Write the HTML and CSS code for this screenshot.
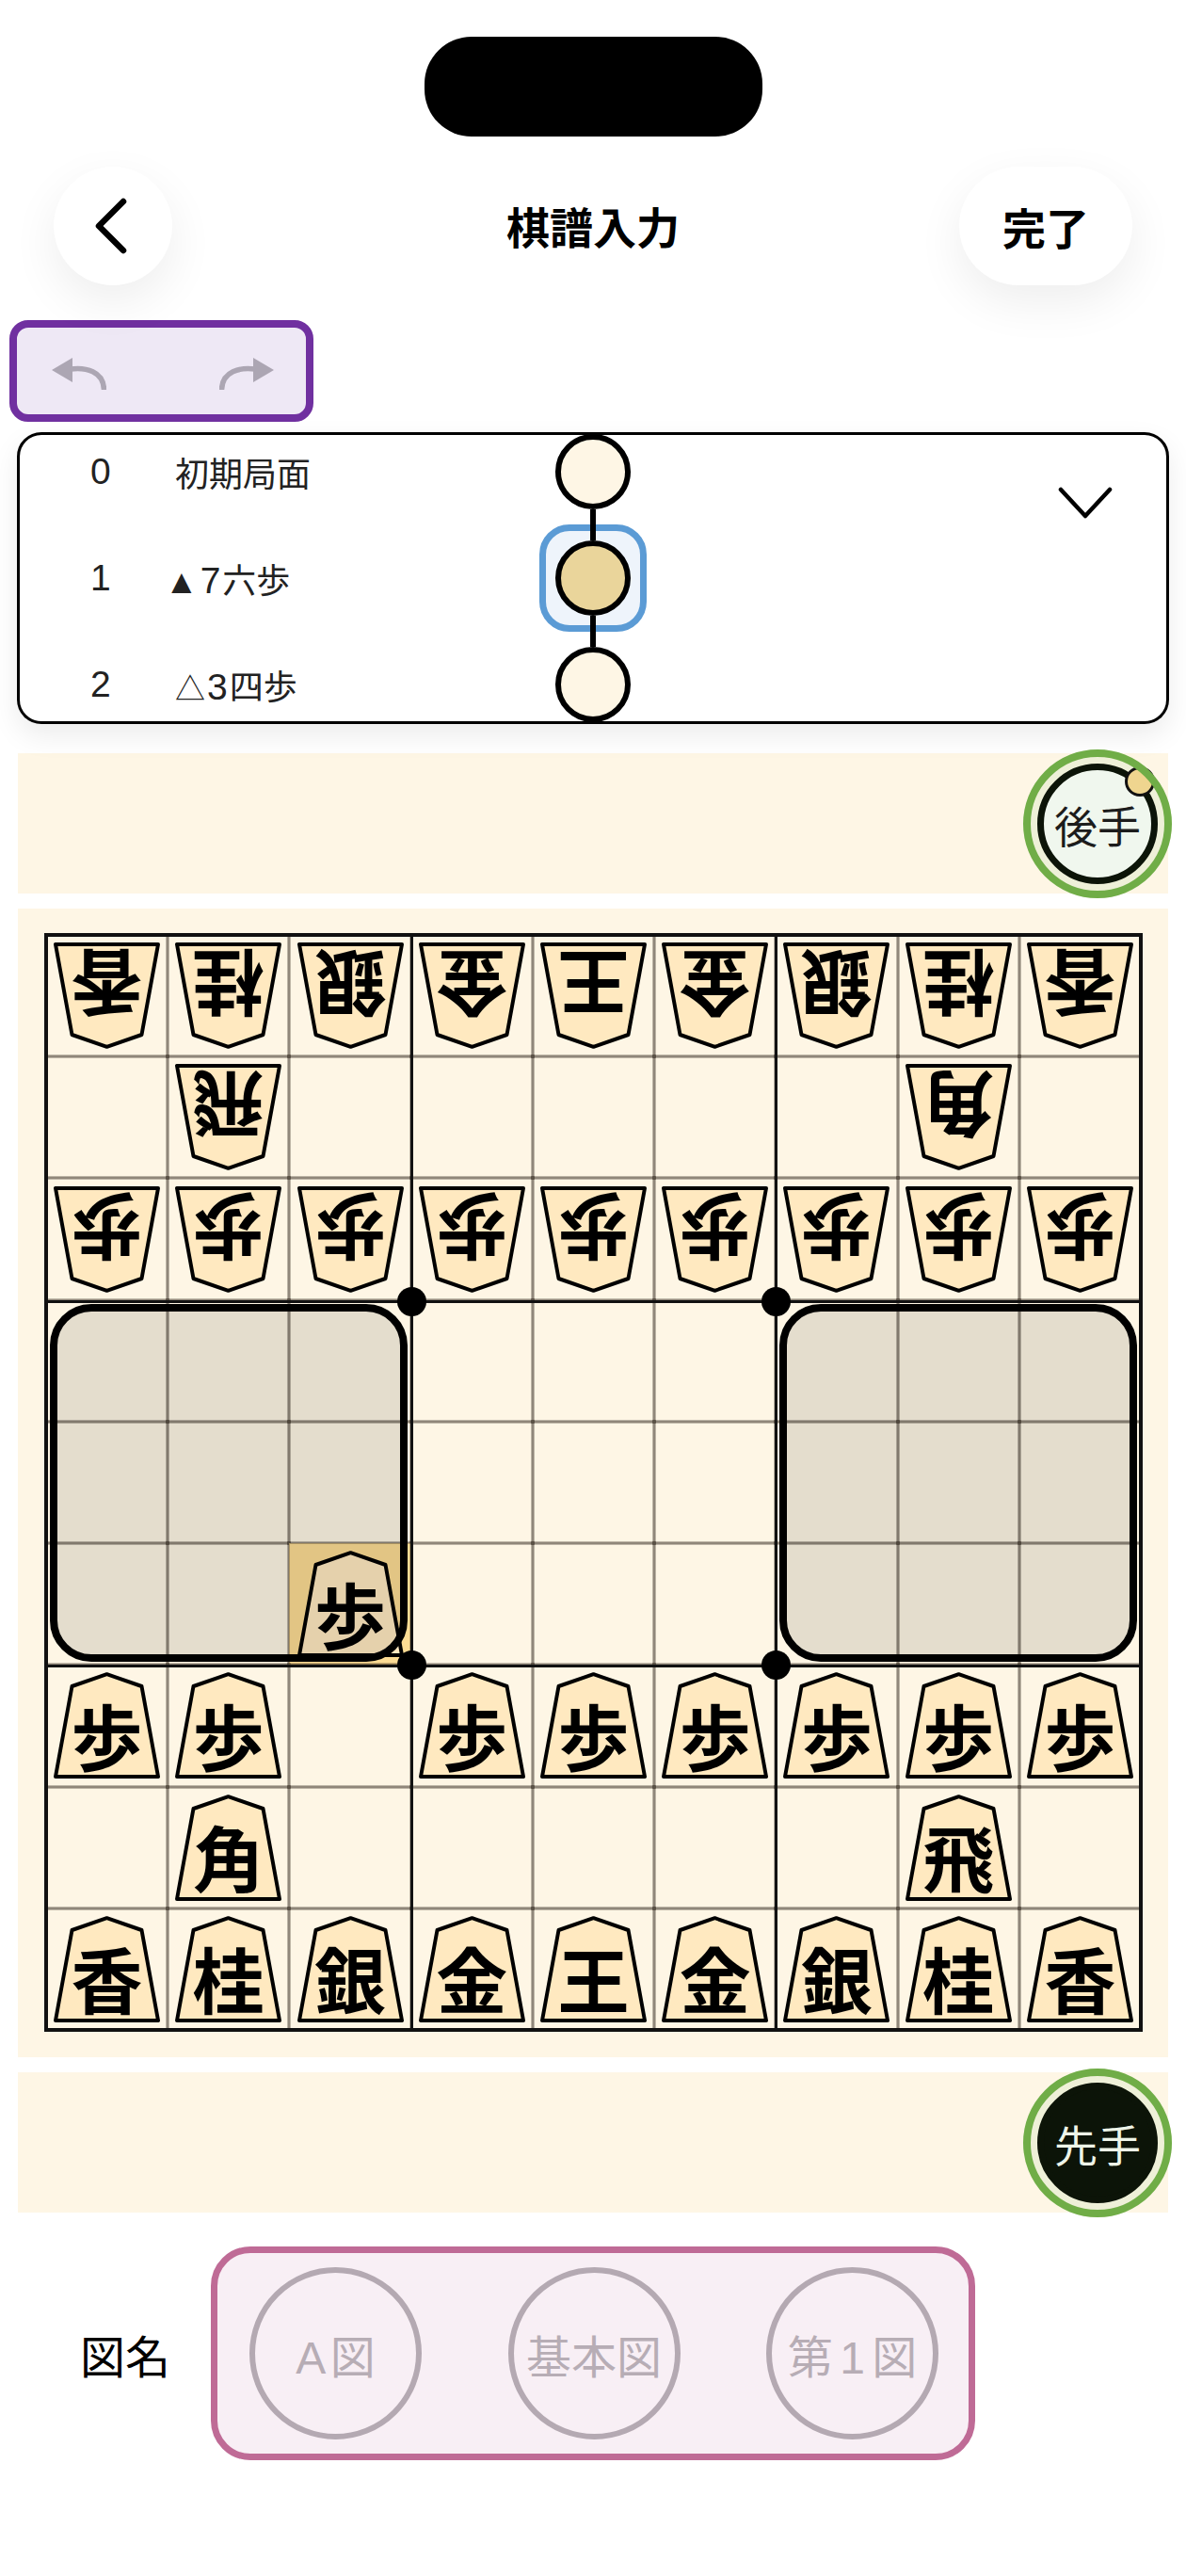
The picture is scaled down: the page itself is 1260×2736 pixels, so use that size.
FILE: index.html
```html
<!DOCTYPE html>
<html lang="ja">
<head>
    <meta charset="UTF-8">
    <meta name="viewport" content="width=device-width, initial-scale=1.0">
    <title>棋譜入力</title>
    <link rel="stylesheet" href="styles.css">
</head>
<body>
    <svg class="defs" width="0" height="0">
        <symbol id="koma" viewBox="0 0 113 113">
            <polygon points="56.5,2.2 93.5,15 111,111 2,111 19.5,15"/>
        </symbol>
        <symbol id="arrow" viewBox="0 0 58 34">
            <polygon points="0,13 22,0 22,26"/>
            <path d="M20 12 C36 10 55 14 55.5 34" fill="none" stroke-width="5.5"/>
        </symbol>
    </svg>

    <div class="island"></div>

    <header class="topbar">
        <button class="round-btn back-btn">
            <svg width="36" height="60" viewBox="0 0 36 60"><polyline points="32,4 6,30 32,56"/></svg>
        </button>
        <h1>棋譜入力</h1>
        <button class="round-btn done-btn">完了</button>
    </header>

    <div class="undo-box">
        <svg class="arrow"><use href="#arrow"/></svg>
        <svg class="arrow flip"><use href="#arrow"/></svg>
    </div>

    <section class="history">
        <div class="history-list">
            <div class="move">
                <span class="move-no">0</span>
                <span class="move-text">初期局面</span>
                <div class="node-slot"><div class="node link"></div></div>
            </div>
            <div class="move">
                <span class="move-no">1</span>
                <span class="move-text mark">▲<span class="num">7</span>六歩</span>
                <div class="node-slot current"><div class="node link"></div></div>
            </div>
            <div class="move">
                <span class="move-no">2</span>
                <span class="move-text"><span class="sign">△</span><span class="num">3</span>四歩</span>
                <div class="node-slot"><div class="node"></div></div>
            </div>
        </div>
        <svg class="expand" width="58" height="34" viewBox="0 0 58 34"><polyline points="3,3 29,31 55,3"/></svg>
    </section>

    <div class="hand">
        <div class="turn">
            <div class="turn-disc">後手</div>
            <span class="turn-marker"></span>
        </div>
    </div>

    <div class="board-pane">
        <div class="board">
            <div class="cell"><div class="piece gote"><svg><use href="#koma"/></svg><span>香</span></div></div>
            <div class="cell"><div class="piece gote"><svg><use href="#koma"/></svg><span>桂</span></div></div>
            <div class="cell"><div class="piece gote"><svg><use href="#koma"/></svg><span>銀</span></div></div>
            <div class="cell"><div class="piece gote"><svg><use href="#koma"/></svg><span>金</span></div></div>
            <div class="cell"><div class="piece gote"><svg><use href="#koma"/></svg><span>王</span></div></div>
            <div class="cell"><div class="piece gote"><svg><use href="#koma"/></svg><span>金</span></div></div>
            <div class="cell"><div class="piece gote"><svg><use href="#koma"/></svg><span>銀</span></div></div>
            <div class="cell"><div class="piece gote"><svg><use href="#koma"/></svg><span>桂</span></div></div>
            <div class="cell"><div class="piece gote"><svg><use href="#koma"/></svg><span>香</span></div></div>

            <div class="cell"></div>
            <div class="cell"><div class="piece gote"><svg><use href="#koma"/></svg><span>飛</span></div></div>
            <div class="cell"></div>
            <div class="cell"></div>
            <div class="cell"></div>
            <div class="cell"></div>
            <div class="cell"></div>
            <div class="cell"><div class="piece gote"><svg><use href="#koma"/></svg><span>角</span></div></div>
            <div class="cell"></div>

            <div class="cell"><div class="piece gote"><svg><use href="#koma"/></svg><span>歩</span></div></div>
            <div class="cell"><div class="piece gote"><svg><use href="#koma"/></svg><span>歩</span></div></div>
            <div class="cell"><div class="piece gote"><svg><use href="#koma"/></svg><span>歩</span></div></div>
            <div class="cell"><div class="piece gote"><svg><use href="#koma"/></svg><span>歩</span></div></div>
            <div class="cell"><div class="piece gote"><svg><use href="#koma"/></svg><span>歩</span></div></div>
            <div class="cell"><div class="piece gote"><svg><use href="#koma"/></svg><span>歩</span></div></div>
            <div class="cell"><div class="piece gote"><svg><use href="#koma"/></svg><span>歩</span></div></div>
            <div class="cell"><div class="piece gote"><svg><use href="#koma"/></svg><span>歩</span></div></div>
            <div class="cell"><div class="piece gote"><svg><use href="#koma"/></svg><span>歩</span></div></div>

            <div class="cell"></div><div class="cell"></div><div class="cell"></div>
            <div class="cell"></div><div class="cell"></div><div class="cell"></div>
            <div class="cell"></div><div class="cell"></div><div class="cell"></div>

            <div class="cell"></div><div class="cell"></div><div class="cell"></div>
            <div class="cell"></div><div class="cell"></div><div class="cell"></div>
            <div class="cell"></div><div class="cell"></div><div class="cell"></div>

            <div class="cell"></div>
            <div class="cell"></div>
            <div class="cell last-move"><div class="piece"><svg><use href="#koma"/></svg><span>歩</span></div></div>
            <div class="cell"></div>
            <div class="cell"></div>
            <div class="cell"></div>
            <div class="cell"></div>
            <div class="cell"></div>
            <div class="cell"></div>

            <div class="cell"><div class="piece"><svg><use href="#koma"/></svg><span>歩</span></div></div>
            <div class="cell"><div class="piece"><svg><use href="#koma"/></svg><span>歩</span></div></div>
            <div class="cell"></div>
            <div class="cell"><div class="piece"><svg><use href="#koma"/></svg><span>歩</span></div></div>
            <div class="cell"><div class="piece"><svg><use href="#koma"/></svg><span>歩</span></div></div>
            <div class="cell"><div class="piece"><svg><use href="#koma"/></svg><span>歩</span></div></div>
            <div class="cell"><div class="piece"><svg><use href="#koma"/></svg><span>歩</span></div></div>
            <div class="cell"><div class="piece"><svg><use href="#koma"/></svg><span>歩</span></div></div>
            <div class="cell"><div class="piece"><svg><use href="#koma"/></svg><span>歩</span></div></div>

            <div class="cell"></div>
            <div class="cell"><div class="piece"><svg><use href="#koma"/></svg><span>角</span></div></div>
            <div class="cell"></div>
            <div class="cell"></div>
            <div class="cell"></div>
            <div class="cell"></div>
            <div class="cell"></div>
            <div class="cell"><div class="piece"><svg><use href="#koma"/></svg><span>飛</span></div></div>
            <div class="cell"></div>

            <div class="cell"><div class="piece"><svg><use href="#koma"/></svg><span>香</span></div></div>
            <div class="cell"><div class="piece"><svg><use href="#koma"/></svg><span>桂</span></div></div>
            <div class="cell"><div class="piece"><svg><use href="#koma"/></svg><span>銀</span></div></div>
            <div class="cell"><div class="piece"><svg><use href="#koma"/></svg><span>金</span></div></div>
            <div class="cell"><div class="piece"><svg><use href="#koma"/></svg><span>王</span></div></div>
            <div class="cell"><div class="piece"><svg><use href="#koma"/></svg><span>金</span></div></div>
            <div class="cell"><div class="piece"><svg><use href="#koma"/></svg><span>銀</span></div></div>
            <div class="cell"><div class="piece"><svg><use href="#koma"/></svg><span>桂</span></div></div>
            <div class="cell"><div class="piece"><svg><use href="#koma"/></svg><span>香</span></div></div>

            <div class="shade shade-left"></div>
            <div class="shade shade-right"></div>
            <span class="star star-a"></span>
            <span class="star star-b"></span>
            <span class="star star-c"></span>
            <span class="star star-d"></span>
        </div>
    </div>

    <div class="hand">
        <div class="turn">
            <div class="turn-disc active">先手</div>
        </div>
    </div>

    <div class="title-row">
        <span class="title-label">図名</span>
        <div class="title-box">
            <div class="title-option">A 図</div>
            <div class="title-option">基本図</div>
            <div class="title-option">第 1 図</div>
        </div>
    </div>
</body>
</html>
```

FILE: styles.css
```css
body {
    margin: 0;
    background-color: #fff;
    color: #000;
    font-family: "Liberation Sans", "Noto Sans CJK JP", sans-serif;
}

.defs {
    position: absolute;
}

.island {
    width: 359px;
    height: 106px;
    margin: 39px auto 0;
    border-radius: 50px;
    background-color: #000;
}

/* top bar */
.topbar {
    display: grid;
    grid-template-columns: 1fr auto 1fr;
    align-items: center;
    height: 126px;
    margin-top: 32px;
    padding: 0 57px;
}

.topbar h1 {
    margin: 0 0 2px;
    font-size: 46px;
    font-weight: 700;
}

.round-btn {
    height: 126px;
    padding: 0;
    border: none;
    border-radius: 63px;
    background-color: #fff;
    box-shadow: 0 18px 50px rgba(0, 0, 0, 0.07);
    font-family: inherit;
    font-size: 46px;
    font-weight: 700;
    color: #000;
}

.back-btn {
    width: 126px;
    display: flex;
    align-items: center;
    justify-content: center;
}

.back-btn svg {
    margin-right: 6px;
}

.back-btn polyline {
    fill: none;
    stroke: #000;
    stroke-width: 6.5;
    stroke-linecap: round;
    stroke-linejoin: round;
}

.done-btn {
    width: 184px;
    justify-self: end;
}

/* undo and redo */
.undo-box {
    display: flex;
    justify-content: space-between;
    box-sizing: border-box;
    width: 323px;
    height: 108px;
    margin: 37px 0 0 10px;
    padding: 32px 34px 0 37px;
    border: 8px solid #7030a0;
    border-radius: 20px;
    background-color: #eee8f5;
}

.arrow {
    width: 58px;
    height: 34px;
    fill: #aca6b3;
    stroke: #aca6b3;
    stroke-width: 0;
}

.flip {
    transform: scaleX(-1);
}

/* move list */
.history {
    position: relative;
    box-sizing: border-box;
    height: 310px;
    margin: 11px 18px 0;
    border: 3px solid #000;
    border-radius: 26px;
    background-color: #fff;
    box-shadow: 0 12px 30px rgba(0, 0, 0, 0.08);
    overflow: hidden;
}

.history-list {
    margin-top: -18px;
}

.move {
    display: grid;
    grid-template-columns: 90px 404px 80px;
    align-items: center;
    height: 113px;
    padding-left: 75px;
    font-size: 36px;
    color: #222;
}

.move-no {
    font-size: 39px;
}

.num {
    font-size: 39px;
    margin: 0 2px;
}

.sign {
    font-size: 32px;
}

.mark {
    margin-left: -11px;
}

.node-slot {
    position: relative;
    height: 80px;
}

.node-slot.current::before {
    content: "";
    position: absolute;
    left: -17px;
    top: -17px;
    width: 100px;
    height: 100px;
    border: 7px solid #5b9bd5;
    border-radius: 32px;
    background-color: #eef4fb;
}

.node {
    position: relative;
    z-index: 1;
    box-sizing: border-box;
    width: 80px;
    height: 80px;
    border: 6px solid #000;
    border-radius: 50%;
    background-color: #fef6e5;
}

.current .node {
    background-color: #ead59b;
}

.node.link::after {
    content: "";
    position: absolute;
    left: 31px;
    top: 74px;
    width: 6px;
    height: 33px;
    background-color: #000;
}

.expand {
    position: absolute;
    right: 57px;
    top: 55px;
}

.expand polyline {
    fill: none;
    stroke: #000;
    stroke-width: 4.5;
    stroke-linecap: round;
    stroke-linejoin: round;
}

/* pieces in hand and turn badge */
.hand {
    display: flex;
    align-items: center;
    justify-content: flex-end;
    height: 149px;
    margin: 31px 19px 0;
    background-color: #fef6e5;
}

.board-pane + .hand {
    margin-top: 16px;
}

.turn {
    position: relative;
    flex: none;
    box-sizing: border-box;
    width: 158px;
    height: 158px;
    margin-right: -4px;
    padding: 15px;
    border-radius: 50%;
    background-color: #eef0d8;
}

.turn::after {
    content: "";
    position: absolute;
    inset: 0;
    z-index: 2;
    border: 8px solid #70ad47;
    border-radius: 50%;
}

.turn-disc {
    display: flex;
    align-items: center;
    justify-content: center;
    box-sizing: border-box;
    height: 100%;
    border: 7px solid #0c1408;
    border-radius: 50%;
    background-color: #f0f7ee;
    font-size: 46px;
    color: #1c1c1c;
}

.turn-disc.active {
    background-color: #0c1408;
    color: #eef5e8;
}

.turn-marker {
    position: absolute;
    left: 108px;
    top: 18px;
    z-index: 1;
    box-sizing: border-box;
    width: 32px;
    height: 32px;
    border: 3px solid #111;
    border-radius: 50%;
    background-color: #efd58f;
}

/* board */
.board-pane {
    height: 1220px;
    margin: 16px 19px 0;
    padding: 28px 0 0 30px;
    box-sizing: border-box;
    background-color: #fef6e5;
}

.board {
    position: relative;
    display: grid;
    grid-template-columns: repeat(9, 1fr);
    grid-template-rows: repeat(9, 1fr);
    width: 1163px;
    height: 1163px;
}

/* the outer frame and the heavier lines at the star points */
.board::before {
    content: "";
    position: absolute;
    inset: -2px;
    border: 4px solid #111;
    background-image:
        linear-gradient(#111, #111),
        linear-gradient(#111, #111),
        linear-gradient(#111, #111),
        linear-gradient(#111, #111);
    background-repeat: no-repeat;
    background-size: 3px 100%, 3px 100%, 100% 3px, 100% 3px;
    background-position: 385px 0, 772px 0, 0 386px, 0 773px;
}

.cell {
    display: flex;
    align-items: center;
    justify-content: center;
    outline: 3px solid rgba(40, 30, 20, 0.3);
    outline-offset: -1.5px;
}

.last-move {
    background-color: #fcdc94;
}

.piece {
    position: relative;
    display: flex;
    align-items: center;
    justify-content: center;
    width: 113px;
    height: 113px;
}

.piece.gote {
    transform: rotate(180deg);
}

.piece svg {
    position: absolute;
    inset: 0;
    width: 113px;
    height: 113px;
    fill: #ffe9c0;
    stroke: #000;
    stroke-width: 4;
    stroke-linejoin: round;
}

.piece span {
    position: relative;
    padding-top: 18px;
    font-family: "Noto Sans CJK JP", sans-serif;
    font-size: 76px;
    font-weight: 700;
    line-height: 1;
}

.shade {
    position: absolute;
    top: 392px;
    box-sizing: border-box;
    width: 380px;
    height: 380px;
    border: 8px solid #000;
    border-radius: 44px;
    background-color: rgba(0, 0, 0, 0.1);
}

.shade-left {
    left: 4px;
}

.shade-right {
    left: 779px;
}

.star {
    position: absolute;
    width: 31px;
    height: 31px;
    margin: -15.5px 0 0 -15.5px;
    border-radius: 50%;
    background-color: #000;
}

.star-a { left: 388px; top: 389px; }
.star-b { left: 775px; top: 389px; }
.star-c { left: 388px; top: 775px; }
.star-d { left: 775px; top: 775px; }

/* diagram name */
.title-row {
    display: flex;
    align-items: center;
    gap: 49px;
    margin-top: 36px;
    padding-left: 85px;
}

.title-label {
    font-size: 48px;
    width: 90px;
    white-space: nowrap;
}

.title-box {
    display: flex;
    align-items: center;
    justify-content: space-between;
    box-sizing: border-box;
    width: 812px;
    height: 227px;
    padding: 0 32px 0 34px;
    border: 7px solid #bf6b96;
    border-radius: 42px;
    background-color: #f8eff5;
}

.title-option {
    display: flex;
    align-items: center;
    justify-content: center;
    box-sizing: border-box;
    width: 183px;
    height: 183px;
    border: 6px solid #b4a9b2;
    border-radius: 50%;
    font-size: 48px;
    word-spacing: -6px;
    color: #b7adb5;
    white-space: pre;
}
```
